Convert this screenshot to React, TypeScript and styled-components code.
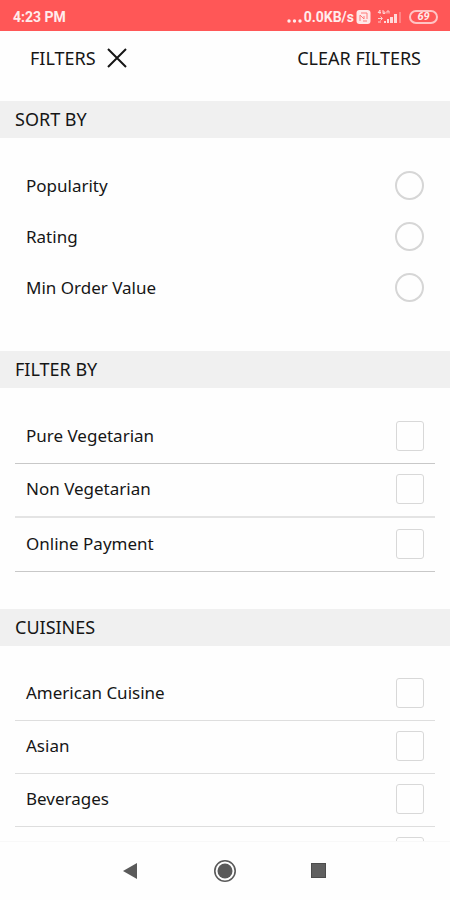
import React from "react";
import styled, { createGlobalStyle } from "styled-components";

const GlobalStyle = createGlobalStyle`
  *, *::before, *::after { box-sizing: border-box; }
  body {
    margin: 0;
    background: #fefefe;
    color: #161616;
    font-family: "Noto Sans", "Open Sans", sans-serif;
  }
`;

const Screen = styled.div`
  display: flex;
  flex-direction: column;
  height: 100vh;
  overflow: hidden;
`;

const StatusBar = styled.div`
  flex: none;
  display: flex;
  align-items: center;
  justify-content: space-between;
  height: 31px;
  padding: 2px 12px 0 13px;
  background: #ff5757;
  color: #ffecec;
  font: 700 14px/16px Roboto, sans-serif;
`;

const StatusGroup = styled.div`
  display: flex;
  align-items: center;
  gap: 2px;
  svg { display: block; }
`;

const Header = styled.header`
  flex: none;
  display: flex;
  align-items: center;
  justify-content: space-between;
  padding: 8px 29px 24px 30px;
`;

const HeaderButton = styled.button`
  display: flex;
  align-items: center;
  gap: 11px;
  height: 38px;
  padding: 0;
  border: 0;
  background: none;
  color: inherit;
  font: 400 18px/24px "Noto Sans", "Open Sans", sans-serif;
  cursor: pointer;
`;

const Content = styled.main`
  flex: 1;
  min-height: 0;
  overflow: hidden;
`;

const SectionTitle = styled.h2`
  margin: 0;
  padding: 6px 15px 7px;
  background: #f0f0f0;
  font-size: 18px;
  line-height: 24px;
  font-weight: 400;
`;

const Options = styled.div<{ $bottom: number }>`
  padding: 22px 15px ${(p) => p.$bottom}px;
`;

const Row = styled.label<{ $height: number; $line?: string; $thick?: boolean }>`
  display: flex;
  align-items: center;
  justify-content: space-between;
  height: ${(p) => p.$height}px;
  padding: 0 11px ${(p) => (p.$line ? 2 : 0)}px;
  border-bottom: ${(p) => (p.$line ? `${p.$thick ? 2 : 1}px solid ${p.$line}` : "0")};
  font-size: 17px;
  line-height: 24px;
  cursor: pointer;
`;

const Radio = styled.input.attrs({ type: "radio" })`
  appearance: none;
  flex: none;
  width: 29px;
  height: 29px;
  margin: 0;
  border: 2px solid #d6d6d6;
  border-radius: 50%;
  &:checked { background: radial-gradient(#ff5757 45%, transparent 50%); }
`;

const Checkbox = styled.input.attrs({ type: "checkbox" })`
  appearance: none;
  flex: none;
  width: 28px;
  height: 30px;
  margin: 0;
  border: 1px solid #d8d8d8;
  border-radius: 3px;
  &:checked { background: #ff5757; }
`;

const NavBar = styled.nav`
  flex: none;
  display: flex;
  align-items: center;
  justify-content: center;
  gap: 66px;
  height: 59px;
  border-top: 1px solid #f8f8f8;
`;

const NavButton = styled.button`
  width: 28px;
  height: 28px;
  padding: 0;
  border: 0;
  background: none;
  svg { display: block; }
`;

const sortOptions = ["Popularity", "Rating", "Min Order Value"];
const filterOptions = [
  { label: "Pure Vegetarian", line: "#c8c8c8", thick: false },
  { label: "Non Vegetarian", line: "#e4e4e4", thick: true },
  { label: "Online Payment", line: "#c8c8c8", thick: false },
];
const cuisines = ["American Cuisine", "Asian", "Beverages"];

const CloseIcon = () => (
  <svg width="20" height="20" viewBox="0 0 20 20" fill="none" stroke="#151515" strokeWidth="2" aria-hidden="true">
    <path d="M1 1L19 19M19 1L1 19" />
  </svg>
);

const SimIcon = () => (
  <svg width="15" height="14" viewBox="0 0 15 14" aria-hidden="true">
    <rect x="0.5" y="0" width="14" height="14" rx="3" fill="#ffe8e8" />
    <path d="M4 11V5l4 4V6M5 3h6v6M7 11h4" fill="none" stroke="#ff7a7a" strokeWidth="1" />
  </svg>
);

const SignalIcon = () => (
  <svg width="34" height="18" viewBox="0 0 34 18" aria-hidden="true">
    <g fill="none" stroke="#ffd0d0" strokeWidth="1">
      <path d="M5 5l2-3v4M5 4.500h3M10 2v3.500h2V4h-2M14 5.500V3h2v2.500" />
      <path d="M5 10.500h4M7.500 8.500l2 2-2 2M5 14h3" />
    </g>
    <g fill="#ffd9d9">
      <rect x="11" y="13" width="2" height="2" />
      <rect x="14" y="11" width="2" height="4" />
      <rect x="17" y="9" width="3" height="6" />
      <rect x="21" y="6" width="3" height="9" />
      <rect x="26" y="4" width="2" height="11" opacity="0.35" />
    </g>
  </svg>
);

const Battery = styled.span`
  display: flex;
  align-items: center;
  justify-content: center;
  width: 29px;
  height: 14px;
  border: 2px solid #ffc4c4;
  border-radius: 7px;
  font-size: 11px;
  line-height: 10px;
  font-style: italic;
`;

export default function App() {
  return (
    <Screen>
      <GlobalStyle />
      <StatusBar>
        <span>4:23 PM</span>
        <StatusGroup>
          <svg width="15" height="14" viewBox="0 0 15 14" fill="#ffecec" aria-hidden="true">
            <circle cx="2" cy="11" r="1.700" />
            <circle cx="7.500" cy="11" r="1.700" />
            <circle cx="13" cy="11" r="1.700" />
          </svg>
          <span>0.0KB/s</span>
          <SimIcon />
          <SignalIcon />
          <Battery>69</Battery>
        </StatusGroup>
      </StatusBar>
      <Header>
        <HeaderButton type="button">
          FILTERS
          <CloseIcon />
        </HeaderButton>
        <HeaderButton type="button">CLEAR FILTERS</HeaderButton>
      </Header>
      <Content>
        <SectionTitle>SORT BY</SectionTitle>
        <Options $bottom={38}>
          {sortOptions.map((label) => (
            <Row key={label} $height={51}>
              {label}
              <Radio name="sort" />
            </Row>
          ))}
        </Options>
        <SectionTitle>FILTER BY</SectionTitle>
        <Options $bottom={37}>
          {filterOptions.map(({ label, line, thick }) => (
            <Row key={label} $height={54} $line={line} $thick={thick}>
              {label}
              <Checkbox />
            </Row>
          ))}
        </Options>
        <SectionTitle>CUISINES</SectionTitle>
        <Options $bottom={37}>
          {cuisines.map((label) => (
            <Row key={label} $height={53} $line="#dedede">
              {label}
              <Checkbox />
            </Row>
          ))}
          <Row $height={53} $line="#dedede">
            <span />
            <Checkbox aria-label="More cuisines" />
          </Row>
        </Options>
      </Content>
      <NavBar>
        <NavButton type="button" aria-label="Back">
          <svg width="28" height="28" viewBox="0 0 28 28">
            <path d="M6 14L20 6V22Z" fill="#5a5a5a" />
          </svg>
        </NavButton>
        <NavButton type="button" aria-label="Home">
          <svg width="28" height="28" viewBox="0 0 28 28">
            <circle cx="14" cy="14" r="10.2" fill="none" stroke="#5a5a5a" strokeWidth="1.6" />
            <circle cx="14" cy="14" r="7.5" fill="#5a5a5a" />
          </svg>
        </NavButton>
        <NavButton type="button" aria-label="Recent apps">
          <svg width="28" height="28" viewBox="0 0 28 28">
            <rect x="6.5" y="6.5" width="14" height="14" fill="#606060" stroke="#4c4c4c" />
          </svg>
        </NavButton>
      </NavBar>
    </Screen>
  );
}
